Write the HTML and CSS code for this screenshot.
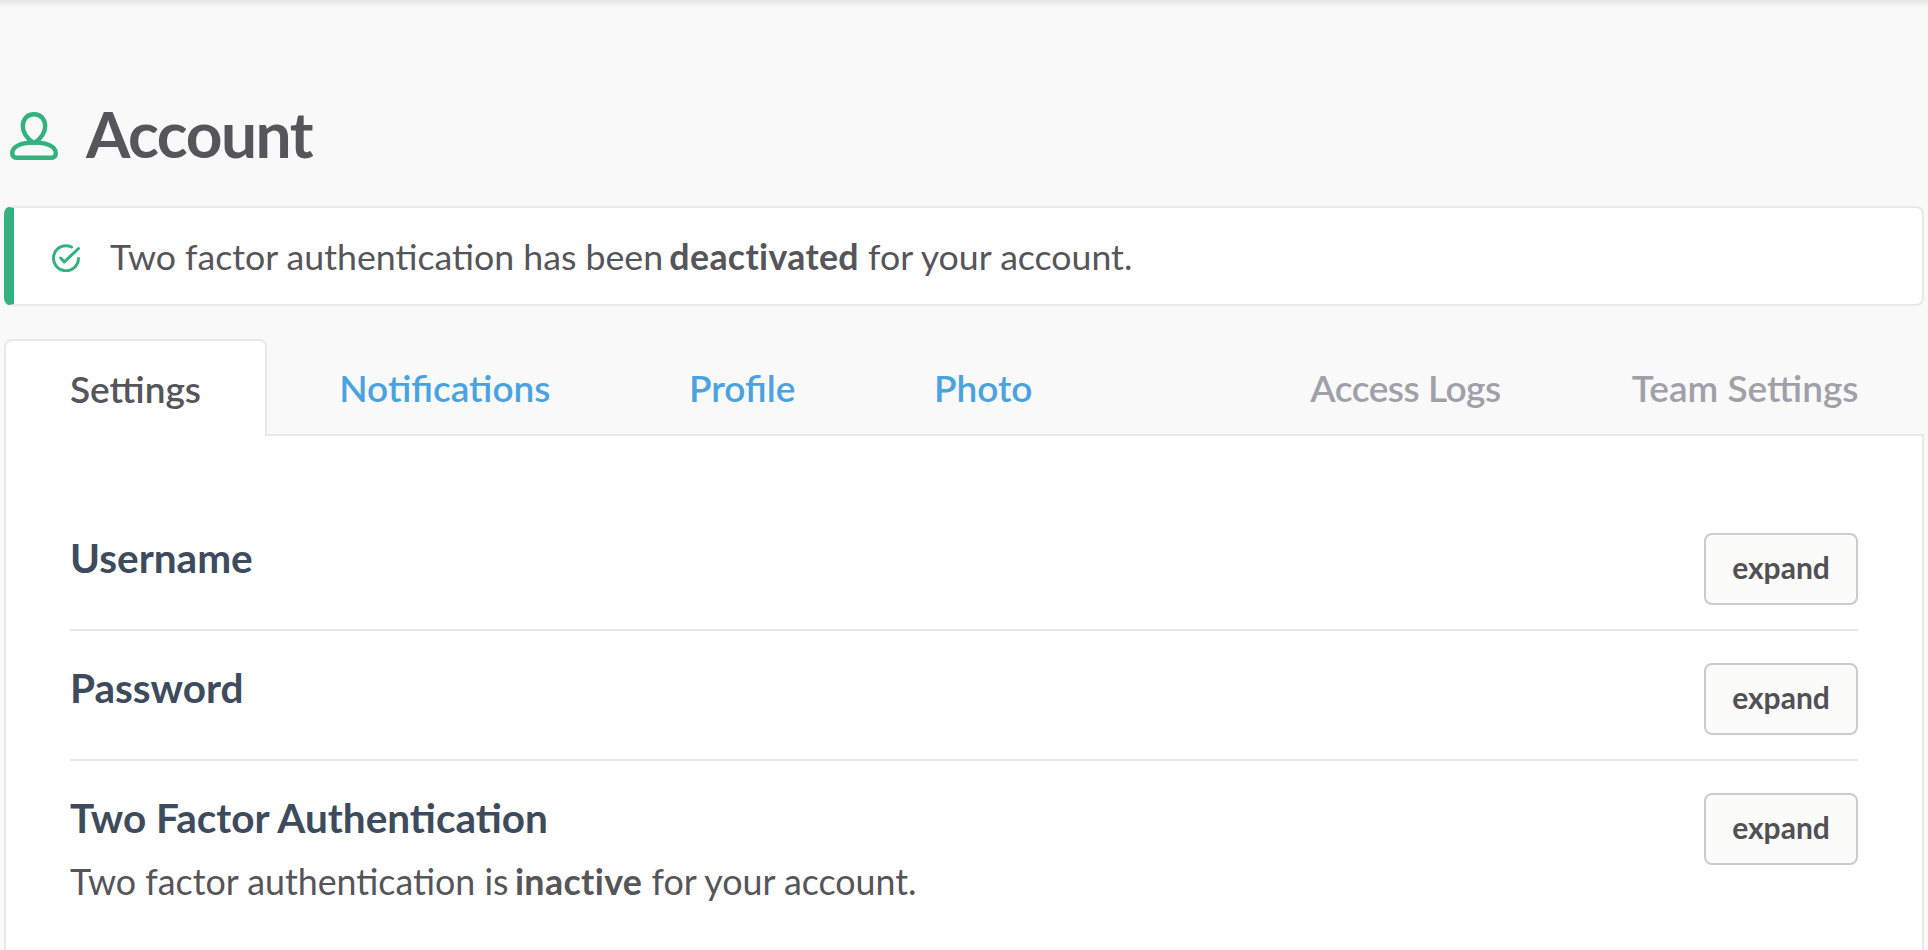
FILE: index.html
```html
<!DOCTYPE html>
<html lang="en">
<head>
<meta charset="utf-8">
<title>Account</title>
<link rel="stylesheet" href="styles.css">
</head>
<body>
<div class="topshadow"></div>
<main class="page">
  <h1 class="title">
    <svg class="person" viewBox="0 0 48 48" fill="none" stroke="#33b27f" stroke-width="4.400" stroke-linejoin="round">
      <path d="M24 2.200C17 2.200 12.800 7.500 12.800 14 12.800 21 17.500 27 24 31 30.500 27 35.200 21 35.200 14 35.200 7.500 31 2.200 24 2.200z"/>
      <path d="M24 30.500C13 30.500 2.200 33.500 2.200 41.200 2.200 44.200 4.200 45.800 7.500 45.800h33c3.300 0 5.300-1.600 5.300-4.600C45.800 33.500 35 30.500 24 30.500z"/>
    </svg>
    <span>Account</span>
  </h1>
  <div class="alert">
    <svg class="check" viewBox="0 0 28 28" fill="none" stroke="#33b27f" stroke-width="3" stroke-linecap="round" stroke-linejoin="round">
      <path d="M19.500 3A12.500 12.500 0 1 0 26.500 14.500"/>
      <path d="M8.700 14l3.500 4L26.500 4.500"/>
    </svg>
    <p>Two factor authentication has been <b>deactivated</b> for your account.</p>
  </div>
  <nav class="tabs">
    <a class="tab tab-active">Settings</a>
    <a class="tab tab-link">Notifications</a>
    <a class="tab tab-link">Profile</a>
    <a class="tab tab-link">Photo</a>
    <span class="spacer"></span>
    <a class="tab tab-muted tab-access">Access Logs</a>
    <a class="tab tab-muted">Team Settings</a>
  </nav>
  <section class="panel">
    <div class="row">
      <h2>Username</h2>
      <button class="expand">expand</button>
    </div>
    <div class="row">
      <h2>Password</h2>
      <button class="expand">expand</button>
    </div>
    <div class="row row-last">
      <div>
        <h2>Two Factor Authentication</h2>
        <p class="desc">Two factor authentication is <b>inactive</b> for your account.</p>
      </div>
      <button class="expand">expand</button>
    </div>
  </section>
</main>
</body>
</html>
```

FILE: styles.css
```css
* { box-sizing: border-box; }
html, body { margin: 0; height: 100%; overflow: hidden; }
body {
  background: #f9f9f9;
  font-family: Lato, "Open Sans", sans-serif;
  color: #55555a;
  position: relative;
}
.topshadow {
  position: absolute;
  top: 0; left: 0; right: 0;
  height: 8px;
  background: linear-gradient(#e4e4e4, #f9f9f9);
}
.page {
  height: 100%;
  padding: 0 4px;
  display: flex;
  flex-direction: column;
}
.title {
  margin: 0;
  height: 206px;
  padding: 98px 0 0 6px;
  display: flex;
  align-items: flex-start;
  gap: 28px;
  font-size: 64px;
  line-height: 72px;
  font-weight: 700;
  letter-spacing: -1.500px;
}
.person { width: 48px; height: 48px; margin-top: 14px; }
.alert {
  height: 100px;
  background: #fff;
  border: 2px solid #e8e8e8;
  border-left: 10px solid #33b27f;
  border-radius: 8px;
  display: flex;
  align-items: center;
  padding-left: 38px;
  gap: 30px;
  font-size: 35.700px;
}
.alert p { margin: 0; }
.check { width: 28px; height: 28px; margin-top: 3px; }
b { font-weight: 700; margin-left: -.08em; letter-spacing: .01em; }
.tabs {
  margin-top: 33px;
  height: 97px;
  display: flex;
  align-items: stretch;
  border-bottom: 2px solid #e8e8e8;
  font-size: 37px;
  font-weight: 600;
  padding-right: 65.500px;
}
.tab {
  display: flex;
  align-items: center;
  padding: 2px 69.300px 0;
}
.tab-active {
  padding: 0 64px;
  margin-right: 3px;
  margin-bottom: -2px;
  background: #fff;
  border: 2px solid #e8e8e8;
  border-bottom: 0;
  border-radius: 8px 8px 0 0;
}
.tab-link { color: #4aa3df; }
.tab-muted { color: #a0a0a8; padding: 2px 65.500px 0; }
.tab-access { letter-spacing: -.450px; }
.tab-muted:last-child { padding-right: 0; }
.spacer { flex: 1; }
.panel {
  flex: 1;
  background: #fff;
  border: 2px solid #e8e8e8;
  border-top: 0;
  border-bottom: 0;
  padding: 97px 64px 0 64px;
}
.row {
  height: 98px;
  display: flex;
  justify-content: space-between;
  align-items: flex-start;
  border-bottom: 2px solid #e8e8e8;
}
.row + .row { height: 130px; padding-top: 32px; }
.row-last { border-bottom: 0; }
h2 {
  margin: 0;
  padding-top: 2px;
  font-size: 40.500px;
  line-height: 46px;
  font-weight: 700;
  color: #3d4b5c;
}
.desc { margin: 18px 0 0; font-size: 35.800px; line-height: 46px; }
.expand {
  width: 154px;
  height: 72px;
  padding: 0 0 5px;
  background: #fbfbf9;
  border: 2px solid #c9cbcf;
  border-radius: 8px;
  font: 700 30px Lato, sans-serif;
  color: #505055;
}
```
